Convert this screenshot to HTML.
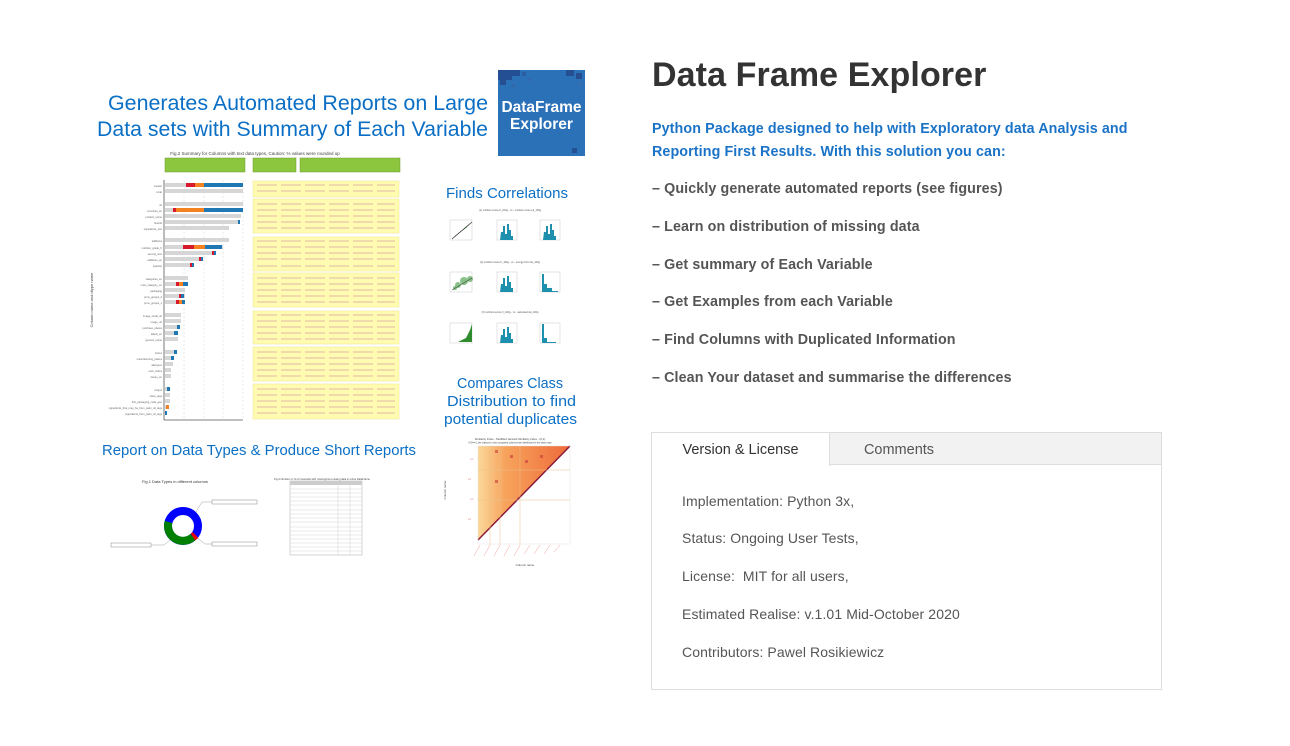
<!DOCTYPE html>
<html><head><meta charset="utf-8">
<style>
*{margin:0;padding:0;box-sizing:border-box}
body{width:1290px;height:746px;background:#fff;position:relative;overflow:hidden;font-family:"Liberation Sans",sans-serif}
.a{position:absolute}
.h1{left:652px;top:56px;font-size:34px;font-weight:bold;color:#333;letter-spacing:0.1px;white-space:nowrap}
.intro{left:652px;top:118px;font-size:14.3px;font-weight:bold;color:#1a73c7;line-height:23px;white-space:nowrap;letter-spacing:0.1px}
.li{left:652px;font-size:14.3px;font-weight:bold;color:#555;white-space:nowrap;letter-spacing:0.1px}
.box{left:651px;top:432px;width:511px;height:258px;border:1px solid #ddd}
.tabs{position:absolute;left:0;top:0;width:509px;height:32px;background:#f2f2f2;border-bottom:1px solid #ddd}
.tab1{position:absolute;left:0;top:0;width:178px;height:33px;background:#fff;border-right:1px solid #ddd;font-size:14.5px;color:#333;text-align:center;line-height:34px}
.tab2{position:absolute;left:178px;top:0;width:138px;height:32px;font-size:14.5px;color:#555;text-align:center;line-height:34px}
.ct{position:absolute;left:30px;font-size:14px;color:#555;white-space:nowrap;letter-spacing:0.1px}
</style></head><body>

<svg class="a" style="left:0;top:0" width="640" height="746" viewBox="0 0 640 746">
<rect x="498" y="70" width="87" height="86" fill="#2b71b8"/>
<rect x="498" y="70" width="14" height="10" fill="#244f95"/><rect x="512" y="70" width="8" height="6" fill="#244f95"/>
<rect x="500" y="80" width="6" height="5" fill="#264f92"/><rect x="522" y="72" width="4" height="4" fill="#2c5ea3"/>
<rect x="528" y="78" width="3" height="3" fill="#3368ac"/><rect x="512" y="84" width="3" height="3" fill="#3568ab"/>
<rect x="566" y="70" width="8" height="6" fill="#264f92"/><rect x="576" y="73" width="6" height="6" fill="#264f92"/>
<rect x="578" y="82" width="3" height="3" fill="#3a6eae"/><rect x="572" y="148" width="5" height="5" fill="#264f92"/>
<text x="541.5" y="112" fill="#fff" font-family="Liberation Sans" font-weight="bold" font-size="15.5" text-anchor="middle">DataFrame</text>
<text x="541.5" y="129" fill="#fff" font-family="Liberation Sans" font-weight="bold" font-size="15.5" text-anchor="middle">Explorer</text>

<g font-family="Liberation Sans,sans-serif" fill="#0b6fc5">
<text x="108" y="110" font-size="21" textLength="380" lengthAdjust="spacingAndGlyphs">Generates Automated Reports on Large</text>
<text x="97" y="136" font-size="21" textLength="391" lengthAdjust="spacingAndGlyphs">Data sets with Summary of Each Variable</text>
<text x="446" y="198" font-size="15" textLength="122" lengthAdjust="spacingAndGlyphs">Finds Correlations</text>
<text x="457" y="388" font-size="15" textLength="106" lengthAdjust="spacingAndGlyphs">Compares Class</text>
<text x="447" y="406" font-size="15" textLength="129" lengthAdjust="spacingAndGlyphs">Distribution to find</text>
<text x="444" y="424" font-size="15" textLength="133" lengthAdjust="spacingAndGlyphs">potential duplicates</text>
<text x="102" y="455" font-size="14.5" textLength="314" lengthAdjust="spacingAndGlyphs">Report on Data Types &amp; Produce Short Reports</text>
</g>

<text x="255" y="155" font-size="4.5" fill="#444" text-anchor="middle" font-family="Liberation Sans">Fig.2 Summary for Columns with text data types, Caution: % values were rounded up</text>
<rect x="165" y="158" width="80" height="14" fill="#8cc63f" stroke="#6a9a2a" stroke-width=".5"/>
<rect x="253" y="158" width="43" height="14" fill="#8cc63f" stroke="#6a9a2a" stroke-width=".5"/>
<rect x="300" y="158" width="100" height="14" fill="#8cc63f" stroke="#6a9a2a" stroke-width=".5"/>
<g fill="#fffbb0" stroke="#eee58a" stroke-width=".5">
<rect x="253" y="181" width="146" height="16"/><rect x="253" y="199" width="146" height="34"/>
<rect x="253" y="237" width="146" height="34"/><rect x="253" y="273" width="146" height="34"/>
<rect x="253" y="311" width="146" height="33"/><rect x="253" y="347" width="146" height="34"/>
<rect x="253" y="384" width="146" height="35"/>
</g>
<g stroke="#e0b8a8" stroke-width="1" stroke-dasharray="20 4">
<line x1="257" y1="185" x2="395" y2="185"/><line x1="257" y1="191" x2="395" y2="191"/>
<line x1="257" y1="204" x2="395" y2="204"/><line x1="257" y1="210" x2="395" y2="210"/><line x1="257" y1="216" x2="395" y2="216"/><line x1="257" y1="222" x2="395" y2="222"/><line x1="257" y1="228" x2="395" y2="228"/>
<line x1="257" y1="241" x2="395" y2="241"/><line x1="257" y1="247" x2="395" y2="247"/><line x1="257" y1="253" x2="395" y2="253"/><line x1="257" y1="259" x2="395" y2="259"/><line x1="257" y1="266" x2="395" y2="266"/>
<line x1="257" y1="278" x2="395" y2="278"/><line x1="257" y1="284" x2="395" y2="284"/><line x1="257" y1="290" x2="395" y2="290"/><line x1="257" y1="296" x2="395" y2="296"/><line x1="257" y1="302" x2="395" y2="302"/>
<line x1="257" y1="315" x2="395" y2="315"/><line x1="257" y1="321" x2="395" y2="321"/><line x1="257" y1="327" x2="395" y2="327"/><line x1="257" y1="333" x2="395" y2="333"/><line x1="257" y1="339" x2="395" y2="339"/>
<line x1="257" y1="352" x2="395" y2="352"/><line x1="257" y1="358" x2="395" y2="358"/><line x1="257" y1="364" x2="395" y2="364"/><line x1="257" y1="370" x2="395" y2="370"/><line x1="257" y1="376" x2="395" y2="376"/>
<line x1="257" y1="389" x2="395" y2="389"/><line x1="257" y1="395" x2="395" y2="395"/><line x1="257" y1="401" x2="395" y2="401"/><line x1="257" y1="407" x2="395" y2="407"/><line x1="257" y1="413" x2="395" y2="413"/>
</g>
<g stroke="#ccc" stroke-width=".4" stroke-dasharray="2 2">
<line x1="184" y1="180" x2="184" y2="418"/><line x1="204" y1="180" x2="204" y2="418"/><line x1="223" y1="180" x2="223" y2="418"/><line x1="243" y1="180" x2="243" y2="418"/>
</g>
<line x1="164" y1="180" x2="164" y2="420" stroke="#555" stroke-width=".8"/>
<line x1="164" y1="420" x2="243" y2="420" stroke="#555" stroke-width=".8"/>
<g fill="#d6d6d6">
<rect x="165" y="183" width="78" height="4"/><rect x="165" y="189" width="78" height="4"/>
<rect x="165" y="202" width="78" height="4"/><rect x="165" y="208" width="78" height="4"/><rect x="165" y="214" width="76" height="4"/><rect x="165" y="220" width="74" height="4"/><rect x="165" y="226" width="64" height="4"/>
<rect x="165" y="238" width="64" height="4"/><rect x="165" y="245" width="58" height="4"/><rect x="165" y="251" width="49" height="4"/><rect x="165" y="257" width="37" height="4"/><rect x="165" y="263" width="27" height="4"/>
<rect x="165" y="276" width="23" height="4"/><rect x="165" y="282" width="23" height="4"/><rect x="165" y="288" width="20" height="4"/><rect x="165" y="294" width="20" height="4"/><rect x="165" y="300" width="19" height="4"/>
<rect x="165" y="313" width="16" height="4"/><rect x="165" y="319" width="16" height="4"/><rect x="165" y="325" width="14" height="4"/><rect x="165" y="331" width="13" height="4"/><rect x="165" y="337" width="13" height="4"/>
<rect x="165" y="350" width="12" height="4"/><rect x="165" y="356" width="9" height="4"/><rect x="165" y="362" width="8" height="4"/><rect x="165" y="368" width="6" height="4"/><rect x="165" y="374" width="6" height="4"/>
<rect x="165" y="387" width="5" height="4"/><rect x="165" y="393" width="5" height="4"/><rect x="165" y="399" width="5" height="4"/><rect x="165" y="405" width="4" height="4"/>
</g>
<g>
<rect x="186" y="183" width="9" height="4" fill="#d7192b"/><rect x="195" y="183" width="9" height="4" fill="#f58220"/><rect x="204" y="183" width="39" height="4" fill="#1f77b4"/>
<rect x="173" y="208" width="3" height="4" fill="#d7192b"/><rect x="176" y="208" width="28" height="4" fill="#f58220"/><rect x="204" y="208" width="39" height="4" fill="#1f77b4"/>
<rect x="238" y="220" width="2" height="4" fill="#1f77b4"/>
<rect x="183" y="245" width="11" height="4" fill="#d7192b"/><rect x="194" y="245" width="11" height="4" fill="#f58220"/><rect x="205" y="245" width="17" height="4" fill="#1f77b4"/>
<rect x="212" y="251" width="2" height="4" fill="#d7192b"/><rect x="214" y="251" width="2" height="4" fill="#1f77b4"/>
<rect x="199" y="257" width="2" height="4" fill="#d7192b"/><rect x="201" y="257" width="2" height="4" fill="#1f77b4"/>
<rect x="190" y="263" width="2" height="4" fill="#d7192b"/><rect x="192" y="263" width="2" height="4" fill="#1f77b4"/>
<rect x="176" y="282" width="3" height="4" fill="#d7192b"/><rect x="179" y="282" width="4" height="4" fill="#f58220"/><rect x="183" y="282" width="5" height="4" fill="#1f77b4"/>
<rect x="179" y="294" width="2" height="4" fill="#d7192b"/><rect x="181" y="294" width="3" height="4" fill="#1f77b4"/>
<rect x="176" y="300" width="3" height="4" fill="#d7192b"/><rect x="179" y="300" width="3" height="4" fill="#f58220"/><rect x="182" y="300" width="3" height="4" fill="#1f77b4"/>
<rect x="177" y="325" width="3" height="4" fill="#1f77b4"/><rect x="174" y="331" width="4" height="4" fill="#1f77b4"/>
<rect x="174" y="350" width="3" height="4" fill="#1f77b4"/><rect x="171" y="356" width="3" height="4" fill="#1f77b4"/>
<rect x="167" y="387" width="3" height="4" fill="#1f77b4"/><rect x="166" y="405" width="3" height="4" fill="#f58220"/><rect x="165" y="411" width="2" height="4" fill="#1f77b4"/>
</g>
<g fill="#666" font-size="2.6" font-family="Liberation Sans" text-anchor="end">
<text x="162" y="187">creator</text><text x="162" y="193">code</text><text x="162" y="206">url</text><text x="162" y="212">countries_en</text><text x="162" y="218">product_name</text><text x="162" y="224">brands</text><text x="162" y="230">ingredients_text</text>
<text x="162" y="242">additives</text><text x="162" y="249">nutrition_grade_fr</text><text x="162" y="255">serving_size</text><text x="162" y="261">additives_en</text><text x="162" y="267">quantity</text>
<text x="162" y="280">categories_en</text><text x="162" y="286">main_category_en</text><text x="162" y="292">packaging</text><text x="162" y="298">pnns_groups_2</text><text x="162" y="304">pnns_groups_1</text>
<text x="162" y="317">image_small_url</text><text x="162" y="323">image_url</text><text x="162" y="329">purchase_places</text><text x="162" y="335">labels_en</text><text x="162" y="341">generic_name</text>
<text x="162" y="354">stores</text><text x="162" y="360">manufacturing_places</text><text x="162" y="366">allergens</text><text x="162" y="372">emb_codes</text><text x="162" y="378">traces_en</text>
<text x="162" y="391">origins</text><text x="162" y="397">cities_tags</text><text x="162" y="403">first_packaging_code_geo</text><text x="162" y="409">ingredients_that_may_be_from_palm_oil_tags</text><text x="162" y="415">ingredients_from_palm_oil_tags</text>
</g>
<text x="93" y="300" font-size="4" fill="#444" transform="rotate(-90 93 300)" text-anchor="middle" font-family="Liberation Sans">Column name and dtype name</text>

<g font-size="2.5" fill="#555" font-family="Liberation Sans">
<text x="510" y="211" text-anchor="middle">(1) nutrition-score-fr_100g - vs - nutrition-score-uk_100g</text>
<text x="510" y="263" text-anchor="middle">(2) nutrition-score-fr_100g - vs - energy-from-fat_100g</text>
<text x="510" y="313" text-anchor="middle">(3) nutrition-score-fr_100g - vs - saturated-fat_100g</text>
</g>
<g fill="none" stroke="#bbb" stroke-width=".4">
<rect x="450" y="220" width="22" height="20"/><rect x="497" y="220" width="20" height="20"/><rect x="540" y="220" width="20" height="20"/>
<rect x="450" y="272" width="22" height="20"/><rect x="497" y="272" width="20" height="20"/><rect x="540" y="272" width="20" height="20"/>
<rect x="450" y="323" width="22" height="20"/><rect x="497" y="323" width="20" height="20"/><rect x="540" y="323" width="20" height="20"/>
</g>
<path d="M452 238 L470 224 L472 222 L466 228 Z" fill="#2e8b2e"/><line x1="452" y1="239" x2="472" y2="222" stroke="#222" stroke-width=".6"/>
<g fill="#5aa85a" opacity=".7"><circle cx="458" cy="285" r="3"/><circle cx="464" cy="281" r="4"/><circle cx="470" cy="279" r="3"/><circle cx="455" cy="288" r="2"/></g>
<line x1="452" y1="290" x2="472" y2="278" stroke="#222" stroke-width=".5"/>
<path d="M458 342 L466 338 L470 330 L472 324 L472 342 Z" fill="#2e8b2e"/>
<g fill="#1f8fae">
<path d="M500 240 L501 232 L503 232 L503 226 L505 226 L505 234 L507 234 L507 224 L509 224 L509 230 L511 230 L511 236 L513 236 L513 240Z"/>
<path d="M543 240 L544 232 L546 232 L546 226 L548 226 L548 234 L550 234 L550 224 L552 224 L552 230 L554 230 L554 236 L556 236 L556 240Z"/>
<path d="M500 292 L501 284 L503 284 L503 278 L505 278 L505 286 L507 286 L507 276 L509 276 L509 282 L511 282 L511 288 L513 288 L513 292Z"/>
<path d="M542 292 L542 274 L544 274 L544 284 L547 284 L547 288 L552 288 L552 291 L558 291 L558 292Z"/>
<path d="M500 343 L501 335 L503 335 L503 329 L505 329 L505 337 L507 337 L507 327 L509 327 L509 333 L511 333 L511 339 L513 339 L513 343Z"/>
<path d="M542 343 L542 324 L544 324 L544 338 L547 338 L547 342 L556 342 L556 343Z"/>
</g>

<text x="510" y="440" font-size="2.8" fill="#444" text-anchor="middle" font-family="Liberation Sans">Similarity Index - Modified Jaccard Similarity Index - (0,1)</text>
<text x="510" y="443.5" font-size="2.4" fill="#444" text-anchor="middle" font-family="Liberation Sans">if SI==1, the classes in two compared columns are distributed in the same way</text>
<defs><linearGradient id="hg" x1="0" y1="0" x2="1" y2="0"><stop offset="0" stop-color="#fbd89a"/><stop offset=".3" stop-color="#f7a35c"/><stop offset="1" stop-color="#ee6a3a"/></linearGradient></defs>
<path d="M478 446 L570 446 L478 540 Z" fill="url(#hg)"/>
<g fill="#c83a3a" opacity=".6"><rect x="495" y="450" width="3" height="3"/><rect x="510" y="455" width="3" height="3"/><rect x="525" y="460" width="3" height="3"/><rect x="495" y="480" width="3" height="3"/><rect x="540" y="455" width="3" height="3"/></g>
<line x1="478" y1="540" x2="570" y2="446" stroke="#8b1a3a" stroke-width="1.5"/>
<g stroke="#e9c089" stroke-width=".5"><line x1="490" y1="446" x2="490" y2="545"/><line x1="500" y1="446" x2="500" y2="545"/><line x1="520" y1="446" x2="520" y2="545"/><line x1="478" y1="500" x2="570" y2="500"/><line x1="478" y1="470" x2="570" y2="470"/></g>
<rect x="478" y="446" width="92" height="98" fill="none" stroke="#ddd" stroke-width=".4"/>
<g fill="#f08080" font-size="2.3"><text x="470" y="460">col</text><text x="468" y="480">col</text><text x="470" y="500">col</text><text x="468" y="520">col</text></g>
<g stroke="#f4a0a0" stroke-width=".5"><line x1="480" y1="545" x2="474" y2="556"/><line x1="490" y1="545" x2="484" y2="556"/><line x1="500" y1="545" x2="494" y2="556"/><line x1="510" y1="545" x2="504" y2="556"/><line x1="520" y1="545" x2="514" y2="556"/><line x1="530" y1="545" x2="524" y2="554"/><line x1="540" y1="545" x2="534" y2="554"/><line x1="550" y1="545" x2="544" y2="554"/><line x1="560" y1="545" x2="554" y2="552"/></g>
<text x="525" y="566" font-size="3" fill="#444" text-anchor="middle" font-family="Liberation Sans">Column name</text>
<text x="446" y="490" font-size="3" fill="#444" text-anchor="middle" transform="rotate(-90 446 490)" font-family="Liberation Sans">Column name</text>

<text x="175" y="483" font-size="4" fill="#333" text-anchor="middle" font-family="Liberation Sans">Fig.1 Data Types in different columns</text>
<circle cx="183" cy="526" r="15" fill="none" stroke="#0000ff" stroke-width="8"/>
<path d="M168.5 522 A15 15 0 0 0 193 537" fill="none" stroke="#008000" stroke-width="8"/>
<path d="M193 537 A15 15 0 0 0 195.5 535" fill="none" stroke="#e00" stroke-width="8"/>
<g fill="#fff" stroke="#888" stroke-width=".5"><rect x="212" y="500" width="45" height="4"/><rect x="111" y="543" width="40" height="4"/><rect x="212" y="542" width="45" height="4"/></g>
<g stroke="#888" stroke-width=".4" fill="none"><path d="M196 512 L202 502 L212 502"/><path d="M170 540 L164 545 L151 545"/><path d="M196 537 L205 544 L212 544"/></g>

<text x="322" y="480" font-size="2.6" fill="#444" text-anchor="middle" font-family="Liberation Sans">Fig.2 Number or % of rows/cells with missing/non-missing data in entire DataFrame</text>
<rect x="290" y="481" width="72" height="74" fill="#fff" stroke="#aaa" stroke-width=".5"/>
<rect x="290" y="481" width="72" height="4" fill="#ccc"/>
<g stroke="#ccc" stroke-width=".4"><line x1="338" y1="481" x2="338" y2="555"/><line x1="350" y1="481" x2="350" y2="555"/>
<line x1="290" y1="489" x2="362" y2="489"/><line x1="290" y1="493" x2="362" y2="493"/><line x1="290" y1="497" x2="362" y2="497"/><line x1="290" y1="501" x2="362" y2="501"/><line x1="290" y1="505" x2="362" y2="505"/><line x1="290" y1="510" x2="362" y2="510"/><line x1="290" y1="514" x2="362" y2="514"/><line x1="290" y1="518" x2="362" y2="518"/><line x1="290" y1="522" x2="362" y2="522"/><line x1="290" y1="527" x2="362" y2="527"/><line x1="290" y1="531" x2="362" y2="531"/><line x1="290" y1="535" x2="362" y2="535"/><line x1="290" y1="539" x2="362" y2="539"/><line x1="290" y1="543" x2="362" y2="543"/><line x1="290" y1="547" x2="362" y2="547"/><line x1="290" y1="551" x2="362" y2="551"/></g>
</svg>

<div class="a h1">Data Frame Explorer</div>
<div class="a intro">Python Package designed to help with Exploratory data Analysis and<br>Reporting First Results. With this solution you can:</div>
<div class="a li" style="top:181px">– Quickly generate automated reports (see figures)</div>
<div class="a li" style="top:219px">– Learn on distribution of missing data</div>
<div class="a li" style="top:257px">– Get summary of Each Variable</div>
<div class="a li" style="top:294px">– Get Examples from each Variable</div>
<div class="a li" style="top:332px">– Find Columns with Duplicated Information</div>
<div class="a li" style="top:370px">– Clean Your dataset and summarise the differences</div>

<div class="a box">
 <div class="tabs"><div class="tab1">Version &amp; License</div><div class="tab2">Comments</div></div>
 <div class="ct" style="top:60px">Implementation: Python 3x,</div>
 <div class="ct" style="top:97px">Status: Ongoing User Tests,</div>
 <div class="ct" style="top:135px">License:&nbsp; MIT for all users,</div>
 <div class="ct" style="top:173px">Estimated Realise: v.1.01 Mid-October 2020</div>
 <div class="ct" style="top:211px">Contributors: Pawel Rosikiewicz</div>
</div>
</body></html>
